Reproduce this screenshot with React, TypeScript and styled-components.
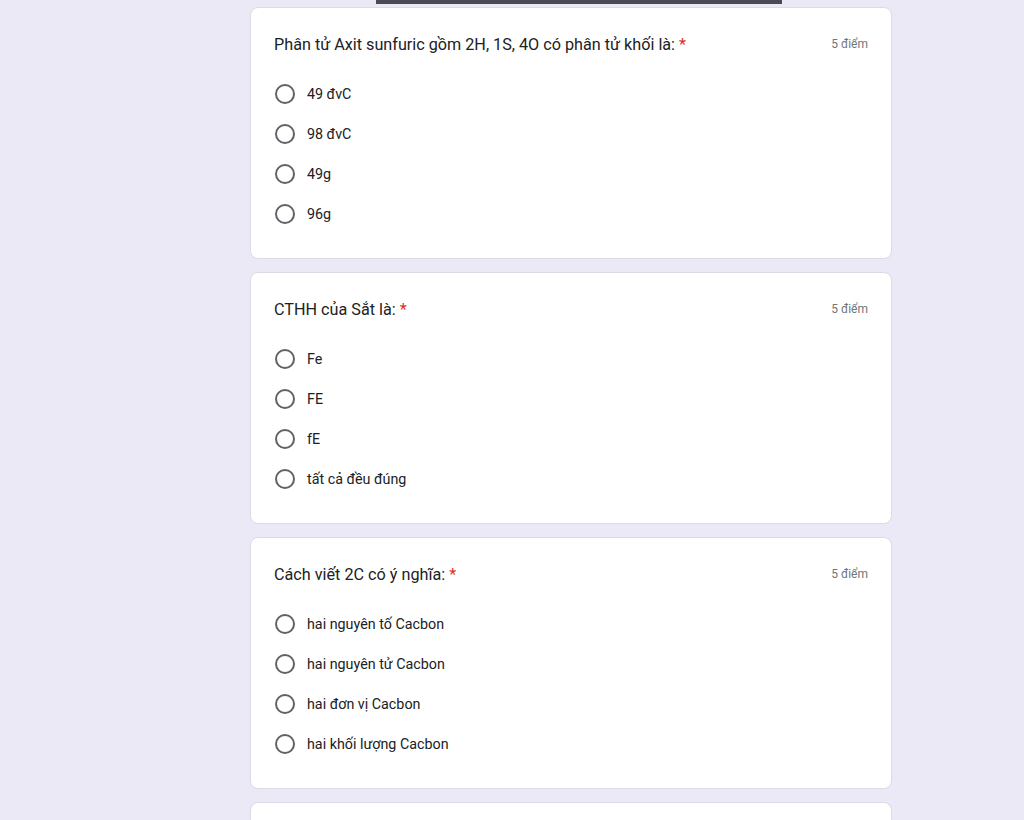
import React from "react";
import styled, { createGlobalStyle } from "styled-components";

const Global = createGlobalStyle`
  html, body { margin: 0; padding: 0; background: #ece9f6; }
  body { font-family: Roboto, "Noto Sans", Arial, sans-serif; }
`;

const Page = styled.div`
  width: 642px;
  margin-left: 250px;
  display: flex;
  flex-direction: column;
`;

const TopBar = styled.div`
  width: 406px;
  height: 4px;
  margin-left: 126px;
  margin-bottom: 3px;
  background: #4b4a52;
`;

const List = styled.div`
  display: flex;
  flex-direction: column;
  gap: 13px;
`;

const Card = styled.section`
  box-sizing: border-box;
  height: 252px;
  background: #fff;
  border: 1px solid #dcdae6;
  border-radius: 8px;
  padding: 24px 23px 0 23px;
`;

const Header = styled.div`
  display: flex;
  justify-content: space-between;
  align-items: center;
  height: 24px;
`;

const Title = styled.div`
  font-family: Roboto, "Noto Sans", sans-serif;
  font-size: 16.2px;
  color: #202124;
`;

const Star = styled.span`
  color: #d93025;
  margin-left: 4px;
`;

const Points = styled.div`
  font-family: Roboto, "Noto Sans", sans-serif;
  font-size: 12px;
  color: #70757a;
`;

const Options = styled.div`
  margin-top: 18px;
  display: flex;
  flex-direction: column;
`;

const Option = styled.label`
  display: flex;
  align-items: center;
  height: 40px;
  gap: 12px;
`;

const Radio = styled.span`
  box-sizing: border-box;
  width: 20px;
  height: 20px;
  margin-left: 1px;
  border-radius: 50%;
  border: 2px solid #5f6368;
  flex: none;
`;

const OptionText = styled.span`
  font-family: Roboto, "Noto Sans", sans-serif;
  font-size: 14.3px;
  color: #202124;
`;

const EmptyCard = styled(Card)`
  height: 40px;
  border-bottom: none;
  border-radius: 8px 8px 0 0;
`;

const questions = [
  {
    title: "Phân tử Axit sunfuric gồm 2H, 1S, 4O có phân tử khối là:",
    options: ["49 đvC", "98 đvC", "49g", "96g"],
  },
  {
    title: "CTHH của Sắt là:",
    options: ["Fe", "FE", "fE", "tất cả đều đúng"],
  },
  {
    title: "Cách viết 2C có ý nghĩa:",
    options: [
      "hai nguyên tố Cacbon",
      "hai nguyên tử Cacbon",
      "hai đơn vị Cacbon",
      "hai khối lượng Cacbon",
    ],
  },
];

export default function App() {
  return (
    <>
      <Global />
      <Page>
        <TopBar />
        <List>
          {questions.map((q) => (
            <Card key={q.title}>
              <Header>
                <Title>
                  {q.title}
                  <Star>*</Star>
                </Title>
                <Points>5 điểm</Points>
              </Header>
              <Options>
                {q.options.map((o) => (
                  <Option key={o}>
                    <Radio />
                    <OptionText>{o}</OptionText>
                  </Option>
                ))}
              </Options>
            </Card>
          ))}
          <EmptyCard />
        </List>
      </Page>
    </>
  );
}
